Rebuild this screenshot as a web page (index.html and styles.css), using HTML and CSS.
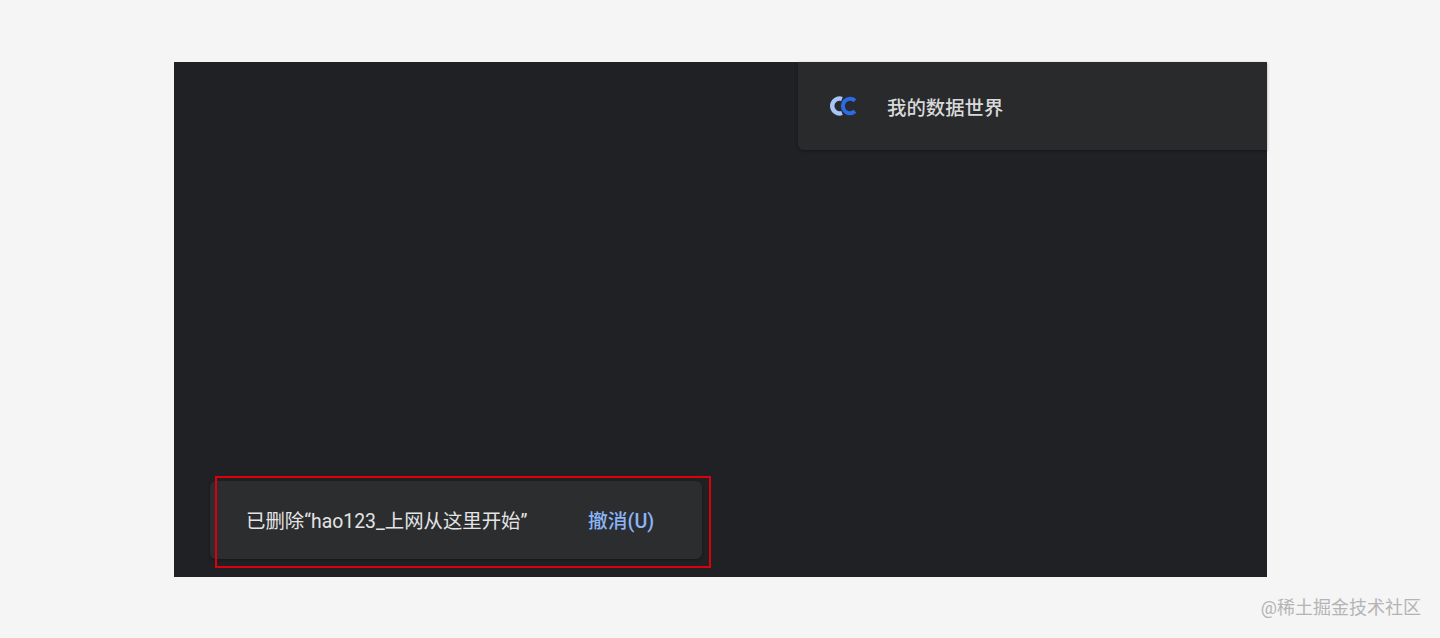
FILE: index.html
```html
<!DOCTYPE html>
<html lang="en">
<head>
    <meta charset="UTF-8">
    <meta name="viewport" content="width=device-width, initial-scale=1.0">
    <title>已删除书签</title>
    <link rel="stylesheet" href="styles.css">
</head>
<body>
    <div class="panel">
        <div class="bookmark-card">
            <svg class="bookmark-icon" viewBox="0 0 26 20" width="26" height="20">
                <path d="M12 3 A7.4 7.4 0 1 0 12 17" fill="none" stroke="#a9c4f7" stroke-width="4.4"/>
                <path d="M25 4.8 A7.2 7.2 0 1 0 25 15.2" fill="none" stroke="#2b6be6" stroke-width="4"/>
            </svg>
            <span class="bookmark-title">我的数据世界</span>
        </div>
        <div class="toast">
            <span class="toast-text">已删除“hao123_上网从这里开始”</span>
            <span class="toast-action">撤消(U)</span>
            <div class="highlight"></div>
        </div>
    </div>
    <div class="watermark">@稀土掘金技术社区</div>
</body>
</html>
```

FILE: styles.css
```css
html, body {
    height: 100%;
}
body {
    margin: 0;
    padding: 62px 173px 61px 174px;
    box-sizing: border-box;
    background-color: #f5f5f5;
    font-family: "Roboto", "Noto Sans CJK SC", sans-serif;
    overflow: hidden;
}
.panel {
    height: 515px;
    background-color: #1f2125;
    display: flex;
    flex-direction: column;
    justify-content: space-between;
}
.bookmark-card {
    align-self: flex-end;
    width: 469px;
    height: 88px;
    box-sizing: border-box;
    padding-left: 32px;
    display: flex;
    align-items: center;
    gap: 31px;
    background-color: #292a2c;
    border-bottom-left-radius: 6px;
    box-shadow: 0 1px 3px rgba(0,0,0,0.35);
}
.bookmark-icon {
    flex: none;
}
.bookmark-title {
    color: #d8d9da;
    font-size: 19.4px;
    font-weight: 500;
    padding-top: 1px;
}
.toast {
    position: relative;
    align-self: flex-start;
    width: 492px;
    height: 78px;
    box-sizing: border-box;
    margin: 0 0 18px 36px;
    padding: 0 0 2px 36px;
    display: flex;
    align-items: center;
    background-color: #2c2d2f;
    border-radius: 6px;
    box-shadow: 0 1px 3px rgba(0,0,0,0.35);
}
.toast-text {
    color: #e3e4e5;
    font-size: 19.4px;
    width: 342px;
    white-space: nowrap;
}
.toast-action {
    color: #8ab4f8;
    font-size: 19.8px;
    font-weight: 500;
    white-space: nowrap;
}
.highlight {
    position: absolute;
    left: 5px;
    top: -5px;
    width: 492px;
    height: 88px;
    border: 2px solid #dc000a;
}
.watermark {
    position: absolute;
    right: 19px;
    bottom: 19px;
    color: #b4b4b4;
    font-size: 18px;
}
```
